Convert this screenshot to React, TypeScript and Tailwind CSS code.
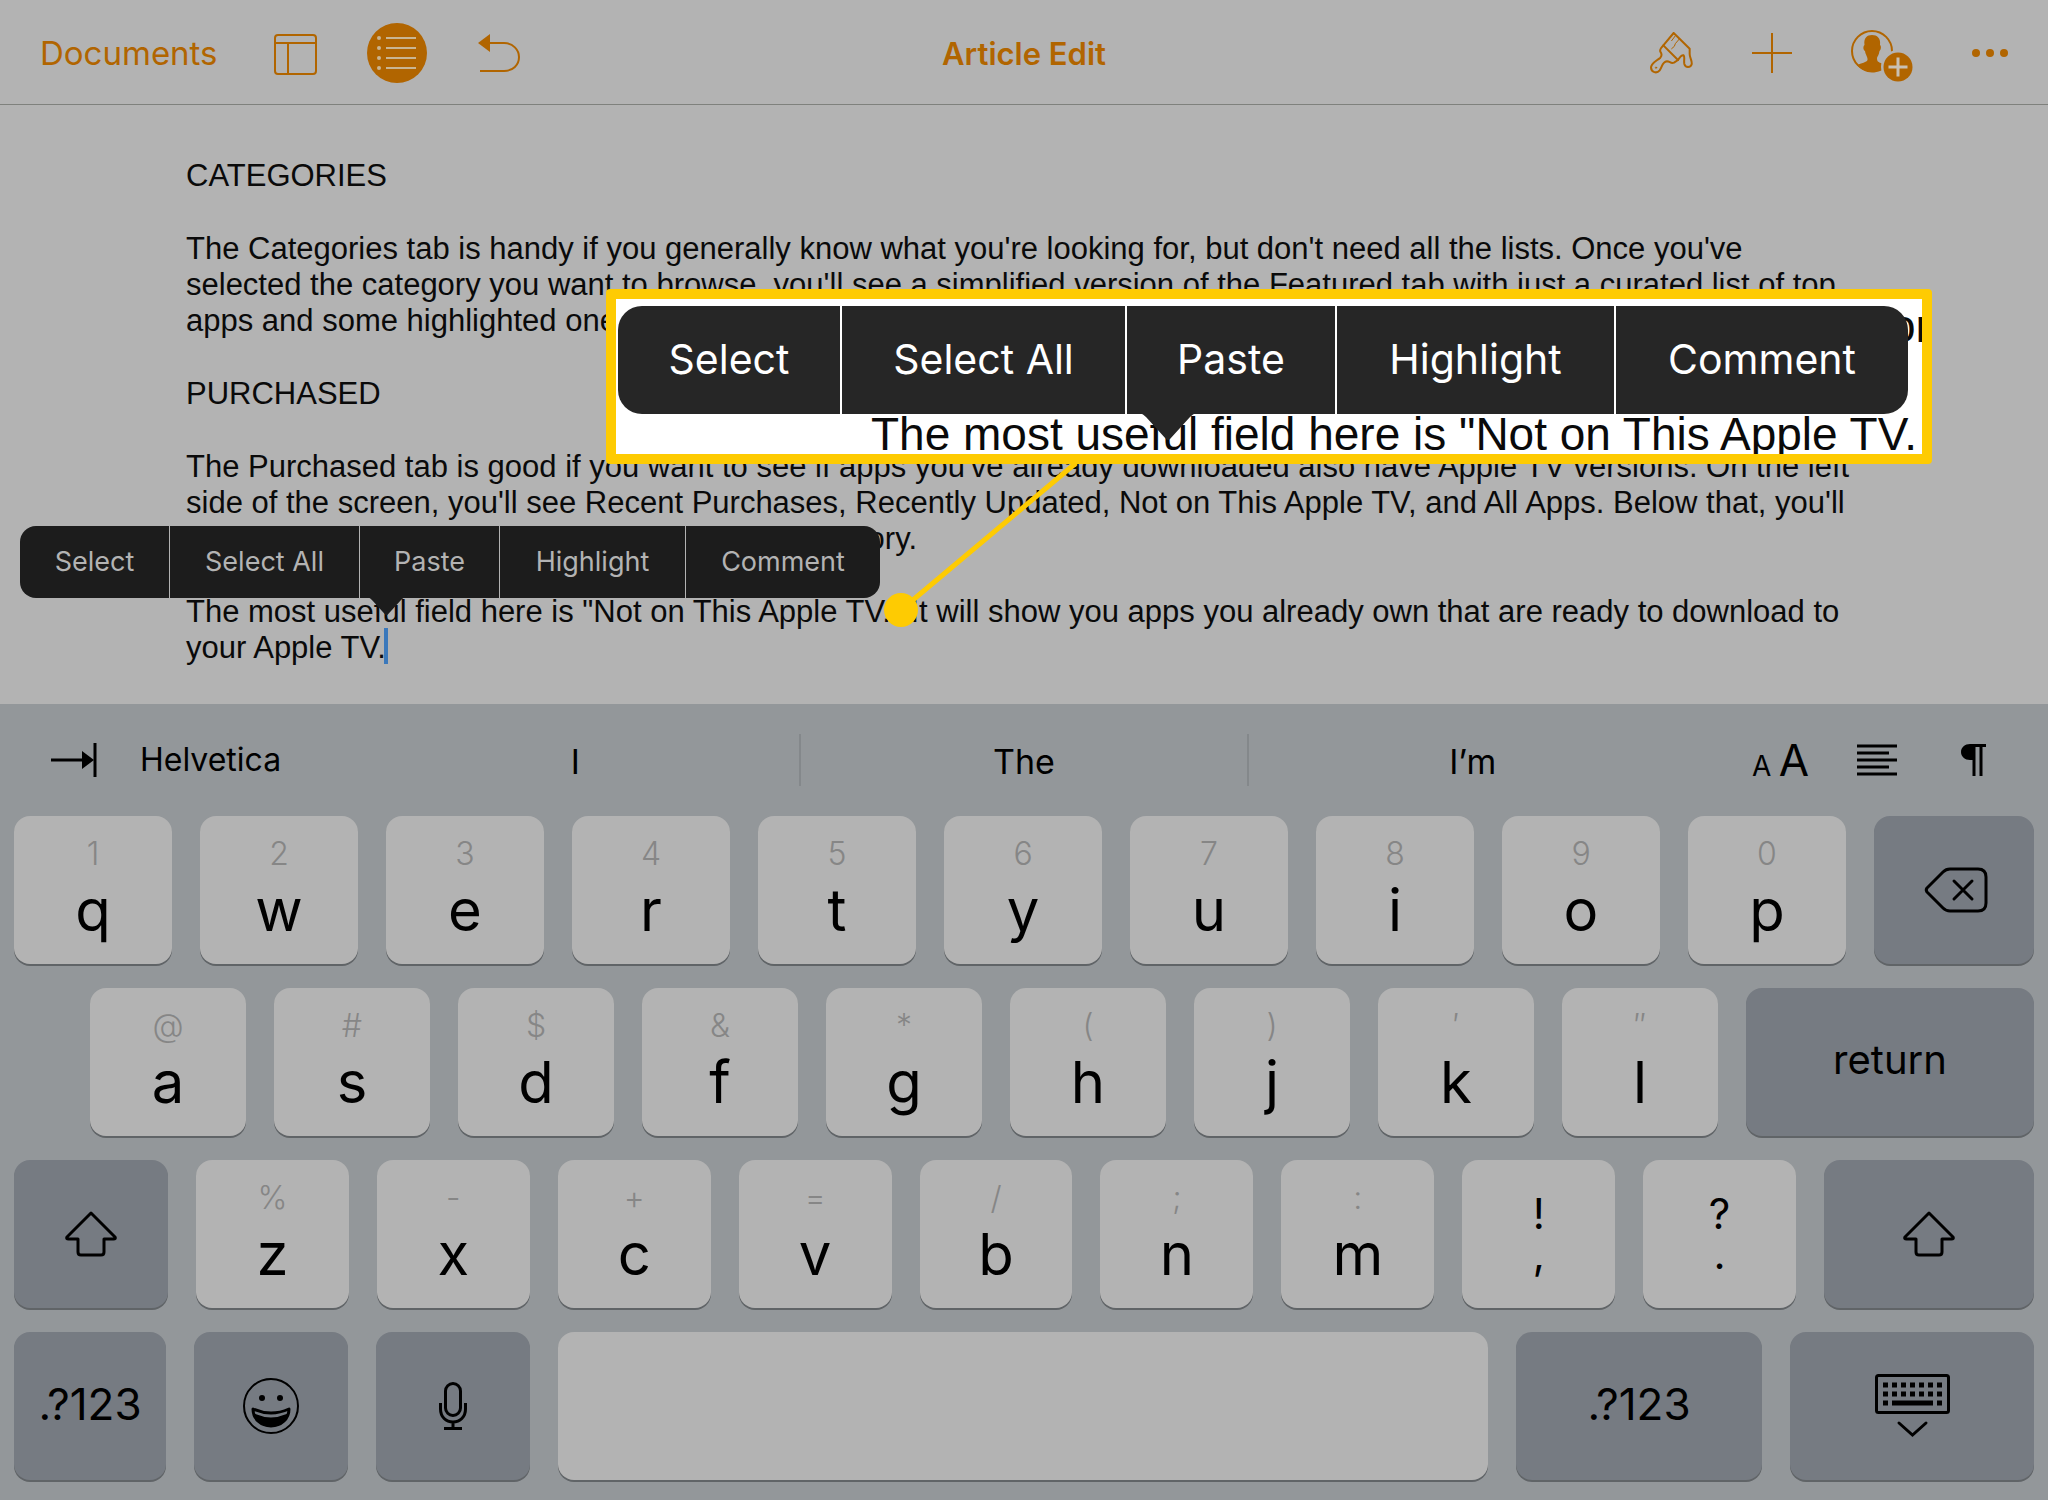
import React from 'react';

interface KeyProps {
  letter: string;
  alt: string;
}

interface EditMenuProps {
  large?: boolean;
}

const topRow: KeyProps[] = [
  { letter: 'q', alt: '1' },
  { letter: 'w', alt: '2' },
  { letter: 'e', alt: '3' },
  { letter: 'r', alt: '4' },
  { letter: 't', alt: '5' },
  { letter: 'y', alt: '6' },
  { letter: 'u', alt: '7' },
  { letter: 'i', alt: '8' },
  { letter: 'o', alt: '9' },
  { letter: 'p', alt: '0' },
];

const homeRow: KeyProps[] = [
  { letter: 'a', alt: '@' },
  { letter: 's', alt: '#' },
  { letter: 'd', alt: '$' },
  { letter: 'f', alt: '&' },
  { letter: 'g', alt: '*' },
  { letter: 'h', alt: '(' },
  { letter: 'j', alt: ')' },
  { letter: 'k', alt: '′' },
  { letter: 'l', alt: '″' },
];

const bottomRow: KeyProps[] = [
  { letter: 'z', alt: '%' },
  { letter: 'x', alt: '-' },
  { letter: 'c', alt: '+' },
  { letter: 'v', alt: '=' },
  { letter: 'b', alt: '/' },
  { letter: 'n', alt: ';' },
  { letter: 'm', alt: ':' },
];

const menuItems = ['Select', 'Select All', 'Paste', 'Highlight', 'Comment'];

const lightKey = 'h-[148px] rounded-2xl bg-[#b3b3b3] shadow-[0_2px_0_#606467]';
const darkKey =
  'flex h-[148px] items-center justify-center rounded-2xl bg-[#767b82] shadow-[0_2px_0_#606467]';

const Key: React.FC<KeyProps> = ({ letter, alt }) => (
  <button className={`${lightKey} flex min-w-0 flex-1 flex-col items-center pt-[18px]`}>
    <span className="text-[32px] leading-10 font-light text-[#868686]">{alt}</span>
    <span className="text-[58px] leading-[72px]">{letter}</span>
  </button>
);

const PunctuationKey: React.FC<KeyProps> = ({ letter, alt }) => (
  <button className={`${lightKey} flex min-w-0 flex-1 flex-col items-center pt-[34px]`}>
    <span className="text-[42px] leading-10">{alt}</span>
    <span className="text-[42px] leading-10">{letter}</span>
  </button>
);

const ShiftIcon = () => (
  <svg className="h-[46px] w-[52px]" viewBox="0 0 52 46" fill="none" stroke="currentColor" strokeWidth="3" strokeLinejoin="round">
    <path d="M26 2 L50 26 Q51 28 48.500 28 H39 V41 Q39 44 36 44 H16 Q13 44 13 41 V28 H3.500 Q1 28 2 26 Z" />
  </svg>
);

const EditMenu: React.FC<EditMenuProps> = ({ large }) => (
  <div
    role="menu"
    className={
      large
        ? 'relative grid h-[108px] w-[1290px] grid-cols-[224fr_285fr_210fr_279fr_292fr] rounded-3xl bg-[#262626] text-[41px] text-white'
        : 'relative grid h-[72px] w-[860px] grid-cols-[150fr_190fr_140fr_186fr_194fr] rounded-2xl bg-[#1c1c1c] text-[27px] text-[#b3b3b3]'
    }
  >
    {menuItems.map((item, i) => (
      <button
        key={item}
        role="menuitem"
        className={`whitespace-nowrap ${i < 4 ? (large ? 'border-r-2 border-white' : 'border-r border-[#b3b3b3]') : ''}`}
      >
        {item}
      </button>
    ))}
    <svg
      className={large ? 'absolute top-[107px] left-[522px] h-[28px] w-[56px]' : 'absolute top-[71px] left-[348px] h-[19px] w-[37px]'}
      viewBox="0 0 56 28"
    >
      <path d="M0 0 H56 Q53 1 50 4 L30 26 Q28 28 26 26 L6 4 Q3 1 0 0 Z" fill={large ? '#262626' : '#1c1c1c'} />
    </svg>
  </div>
);

const Toolbar = () => (
  <header className="grid h-[105px] grid-cols-[1fr_auto_1fr] items-center border-b border-[#7f817d] px-10 pt-0.5 text-[#b16500]">
    <div className="flex items-center">
      <a href="#documents" className="w-[234px] pt-0.5 text-[33px]">Documents</a>
      <button aria-label="View options" className="mr-[50px]">
        <svg className="h-[46px] w-[43px]" viewBox="0 -4 43 46" fill="none" stroke="currentColor" strokeWidth="2">
          <rect x="1" y="1" width="41" height="39" rx="3" />
          <path d="M1 9 H42 M14 9 V40" />
        </svg>
      </button>
      <button aria-label="Outline" className="mr-[51px]">
        <svg className="size-[60px]" viewBox="0 0 60 60">
          <circle cx="30" cy="30" r="30" fill="currentColor" />
          <g fill="#c9b592">
            <circle cx="12" cy="15" r="2" />
            <circle cx="12" cy="25" r="2" />
            <circle cx="12" cy="35" r="2" />
            <circle cx="12" cy="45" r="2" />
          </g>
          <path d="M19 15 H49 M19 25 H49 M19 35 H49 M19 45 H49" stroke="#c9b592" strokeWidth="2" />
        </svg>
      </button>
      <button aria-label="Undo">
        <svg className="h-[40px] w-[44px]" viewBox="0 0 44 40" fill="none" stroke="currentColor" strokeWidth="2">
          <path d="M8 10 H26 C35 10 41 17 41 24 C41 32 35 38 26 38 H2" />
          <path d="M0 10 L12 1 V19 Z" fill="currentColor" stroke="none" />
        </svg>
      </button>
    </div>
    <h1 className="pt-0.5 text-[31px] font-semibold">Article Edit</h1>
    <div className="flex items-center justify-end gap-[59px]">
      <button aria-label="Format">
        <svg className="h-[42px] w-[43px]" viewBox="146 96 129 126" fill="none" stroke="currentColor" strokeWidth="6" strokeLinejoin="round" strokeLinecap="round">
          <path d="M217 99 L186 136 L230 180 Q240 164 247 166 C251 170 247 182 249 192 C252 204 268 204 271 193 C273 182 265 174 265 162 V146 Z" />
          <path d="M186 136 Q174 148 177 155 Q184 165 177 173 C166 183 150 188 149 203 C150 217 166 222 175 211 C183 200 182 186 197 184 C206 184 208 192 218 188 L230 180" />
          <path d="M234 117 L222 131 L219 139 L211 146 M223 106 L211 122" strokeWidth="3" />
          <circle cx="164" cy="203" r="2" strokeWidth="3" />
        </svg>
      </button>
      <button aria-label="Insert">
        <svg className="size-10" viewBox="0 0 40 40" stroke="currentColor" strokeWidth="2">
          <path d="M20 0 V40 M0 20 H40" />
        </svg>
      </button>
      <button aria-label="Collaborate">
        <svg className="h-[58px] w-[62px]" viewBox="0 -6 62 58">
          <circle cx="21" cy="21" r="20" fill="none" stroke="currentColor" strokeWidth="2" />
          <path
            d="M21 5 C26 5 30 8 29 15 C30.500 16 30 20 28.500 21 C28 25 26 27 26 28 C26 32 27 32 34 34.500 L37 36 C33 40 27 42.500 21 42.500 C15 42.500 9 39 6 35 C10 33.500 16 32 16.500 30 C17 27 14.500 25 14 21 C12 20 12 16 13.500 15 C12.500 8 16 5 21 5 Z"
            fill="currentColor"
          />
          <circle cx="47" cy="37" r="17" fill="#b3b3b3" />
          <circle cx="47" cy="37" r="14.500" fill="currentColor" />
          <path d="M47 27.500 V46.500 M37.500 37 H56.500" stroke="#c9c1b4" strokeWidth="3" />
        </svg>
      </button>
      <button aria-label="More">
        <svg className="h-2 w-9" viewBox="0 0 36 8" fill="currentColor">
          <circle cx="4" cy="4" r="4" />
          <circle cx="18" cy="4" r="4" />
          <circle cx="32" cy="4" r="4" />
        </svg>
      </button>
    </div>
  </header>
);

const Document = () => (
  <article className="flex h-[599px] flex-col gap-[37px] pt-[53px] pl-[186px] font-['Liberation_Sans',Arial,sans-serif] text-[31px] leading-9 whitespace-nowrap text-[#0a0a0a]">
    <h2>CATEGORIES</h2>
    <p>
      The Categories tab is handy if you generally know what you're looking for, but don't need all the lists. Once you've
      <br />
      selected the category you want to browse, you'll see a simplified version of the Featured tab with just a curated list of top
      <br />
      apps and some highlighted ones.
    </p>
    <h2>PURCHASED</h2>
    <p>
      The Purchased tab is good if you want to see if apps you've already downloaded also have Apple TV versions. On the left
      <br />
      side of the screen, you'll see Recent Purchases, Recently Updated, Not on This Apple TV, and All Apps. Below that, you'll
      <br />
      <span className="inline-block w-[731px] text-right">see your apps by category.</span>
    </p>
    <p>
      The most useful field here is "Not on This Apple TV." It will show you apps you already own that are ready to download to
      <br />
      your Apple TV.
      <span className="-mt-0.5 -ml-0.5 inline-block h-9 w-1 bg-[#3a78bb] align-top" />
    </p>
  </article>
);

// enlarged copy of the edit menu, with the leader line down to the text
const Callout = () => (
  <>
    <svg className="absolute top-[460px] left-[880px] h-[172px] w-[200px]" viewBox="0 0 200 172">
      <path d="M21 150 L196 3" stroke="#fecb02" strokeWidth="5" />
      <circle cx="21" cy="150" r="17" fill="#fecb02" />
    </svg>
    <div className="absolute top-[289px] left-[606px] h-[175px] w-[1326px] overflow-hidden rounded-sm border-10 border-[#fecb02] bg-white">
      <div className="absolute top-[-5px] left-[1274px] font-['Liberation_Sans',Arial,sans-serif] text-[46px] leading-[64px] text-[#0a0a0a]">or</div>
      <div className="absolute top-[107px] left-[255px] font-['Liberation_Sans',Arial,sans-serif] text-[46px] leading-[56px] whitespace-nowrap text-[#0a0a0a]">
        The most useful field here is "Not on This Apple TV.
      </div>
      <div className="absolute top-[7px] left-[2px]">
        <EditMenu large />
      </div>
    </div>
  </>
);

const SuggestionBar = () => (
  <div className="flex h-28 items-center text-[34px]">
    <div className="flex w-[352px] items-center gap-[43px] pl-[50px]">
      <button aria-label="Tab">
        <svg className="h-[34px] w-[47px]" viewBox="0 0 47 34" stroke="currentColor" strokeWidth="3">
          <path d="M1 17 H33 M45 0 V34" />
          <path d="M32 8 L44 17 L32 26 Z" fill="currentColor" stroke="none" />
        </svg>
      </button>
      <button className="text-[32px]">Helvetica</button>
    </div>
    <button className="h-[52px] flex-1 pt-0.5">I</button>
    <button className="h-[52px] flex-1 border-x-2 border-[#84888b] pt-0.5">The</button>
    <button className="h-[52px] flex-1 pt-0.5">I’m</button>
    <div className="flex w-[352px] items-center pl-14">
      <button aria-label="Text size" className="mr-12 flex w-[57px] items-baseline justify-between leading-none">
        <span className="text-[28px]">A</span>
        <span className="text-[44px]">A</span>
      </button>
      <button aria-label="Alignment" className="mr-16">
        <svg className="h-8 w-10" viewBox="0 0 40 32" stroke="currentColor" strokeWidth="3">
          <path d="M0 2 H40 M0 9 H32 M0 16 H40 M0 23 H32 M0 30 H40" />
        </svg>
      </button>
      <button aria-label="Paragraph">
        <svg className="h-8 w-[25px]" viewBox="0 0 25 32" fill="currentColor">
          <path d="M9 0 H25 V3 H21.500 V32 H18.500 V3 H14.500 V32 H11.500 V16 H9 C4 16 0 12.500 0 8 C0 3.500 4 0 9 0 Z" />
        </svg>
      </button>
    </div>
  </div>
);

const Keyboard = () => (
  <section aria-label="Keyboard" className="flex-1 bg-[#93979a] text-black">
    <SuggestionBar />
    <div className="flex flex-col gap-6 px-[14px] pb-5">
      <div className="flex gap-7">
        {topRow.map((key) => (
          <Key key={key.letter} {...key} />
        ))}
        <button aria-label="Delete" className={`${darkKey} w-[160px]`}>
          <svg className="h-[46px] w-[67px]" viewBox="-3 0 67 46" fill="none" stroke="currentColor" strokeWidth="3" strokeLinecap="round" strokeLinejoin="round">
            <path d="M26 2 H54 Q62 2 62 10 V36 Q62 44 54 44 H26 Q22 44 19 41 L3 25 Q1.500 23 3 21 L19 5 Q22 2 26 2 Z" />
            <path d="M30 14 L48 32 M48 14 L30 32" />
          </svg>
        </button>
      </div>
      <div className="flex gap-7 pl-[76px]">
        {homeRow.map((key) => (
          <Key key={key.letter} {...key} />
        ))}
        <button className={`${darkKey} w-[288px] pb-1 text-[40px]`}>return</button>
      </div>
      <div className="flex gap-7">
        <button aria-label="Shift" className={`${darkKey} w-[154px]`}>
          <ShiftIcon />
        </button>
        {bottomRow.map((key) => (
          <Key key={key.letter} {...key} />
        ))}
        <PunctuationKey letter="," alt="!" />
        <PunctuationKey letter="." alt="?" />
        <button aria-label="Shift" className={`${darkKey} w-[210px]`}>
          <ShiftIcon />
        </button>
      </div>
      <div className="flex gap-7">
        <button className={`${darkKey} w-[152px] pb-1 text-[44px]`}>.?123</button>
        <button aria-label="Emoji" className={`${darkKey} w-[154px]`}>
          <svg className="size-14" viewBox="0 0 56 56" fill="none" stroke="currentColor" strokeWidth="2">
            <circle cx="28" cy="28" r="27" />
            <circle cx="19" cy="20" r="3" fill="currentColor" stroke="none" />
            <circle cx="37" cy="20" r="3" fill="currentColor" stroke="none" />
            <path d="M10 31 Q28 39 46 31 C46 41 38 48 28 48 C18 48 10 41 10 31 Z" strokeWidth="3" strokeLinejoin="round" />
            <path d="M12 37 Q28 44 44 37 C41 44 36 48 28 48 C20 48 15 44 12 37 Z" fill="currentColor" />
          </svg>
        </button>
        <button aria-label="Dictate" className={`${darkKey} w-[154px]`}>
          <svg className="h-12 w-[28px]" viewBox="0 0 28 48" fill="none" stroke="currentColor" strokeWidth="3">
            <rect x="6.500" y="1.500" width="15" height="32" rx="7.500" />
            <path d="M1.500 21 V27 C1.500 35 7 40 14 40 C21 40 26.500 35 26.500 27 V21 M14 40 V46 M5 46.500 H23" />
          </svg>
        </button>
        <button aria-label="Space" className={`${lightKey} flex-1`} />
        <button className={`${darkKey} w-[246px] pb-1 text-[44px]`}>.?123</button>
        <button aria-label="Hide keyboard" className={`${darkKey} w-[244px]`}>
          <svg className="h-[64px] w-[75px]" viewBox="0 0 75 64" fill="none" stroke="currentColor">
            <rect x="1.500" y="1.500" width="72" height="37" rx="2" strokeWidth="3" />
            <path d="M8 11 H69 M8 20 H69" strokeWidth="5" strokeDasharray="5 4" />
            <path d="M8 29 H13 M17 29 H58 M62 29 H67" strokeWidth="5" />
            <path d="M24 49 L37.500 61 L51 49" strokeWidth="3" strokeLinecap="round" />
          </svg>
        </button>
      </div>
    </div>
  </section>
);

const App: React.FC = () => {
  return (
    <main className="relative flex min-h-screen flex-col bg-[#b3b3b3] font-[Inter,sans-serif]">
      <Toolbar />
      <Document />
      <Keyboard />
      <div className="absolute top-[526px] left-5">
        <EditMenu />
      </div>
      <Callout />
    </main>
  );
};

export default App;
